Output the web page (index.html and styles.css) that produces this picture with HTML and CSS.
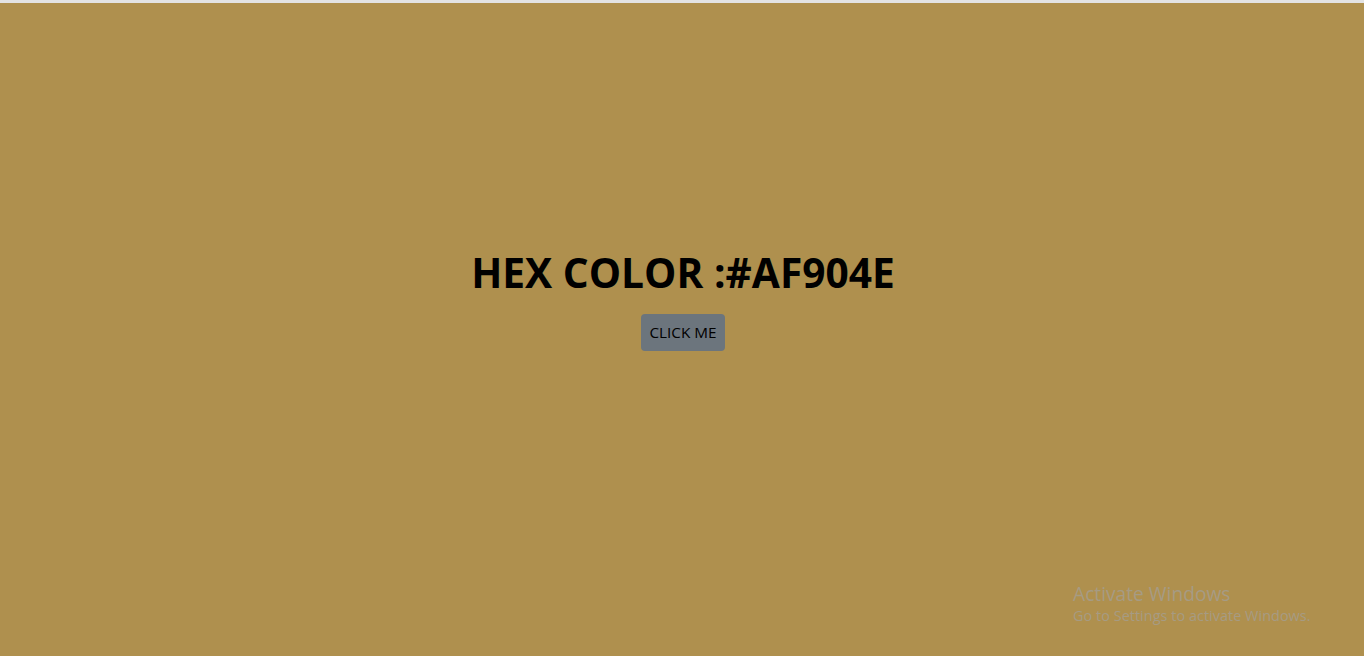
FILE: index.html
```html
<!DOCTYPE html>
<html lang="en">
<head>
<meta charset="utf-8">
<title>Hex Color</title>
<link rel="stylesheet" href="styles.css">
</head>
<body>
<div class="topbar"></div>
<main class="stage">
  <h1 class="title">HEX COLOR :#AF904E</h1>
  <button class="btn" type="button">CLICK ME</button>
</main>
<div class="watermark">
  <div class="wm-title">Activate Windows</div>
  <div class="wm-sub">Go to Settings to activate Windows.</div>
</div>
</body>
</html>
```

FILE: styles.css
```css
html, body {
  margin: 0;
  padding: 0;
  height: 100%;
}
body {
  background: #AF904E;
  font-family: "Open Sans", "Noto Sans", sans-serif;
  display: flex;
  flex-direction: column;
  overflow: hidden;
}
.topbar {
  height: 3px;
  background: #e3e3e3;
  flex: none;
}
.stage {
  display: flex;
  flex-direction: column;
  align-items: center;
  padding-top: 245px;
  padding-left: 2px;
}
.title {
  margin: 0;
  font-size: 40.7px;
  line-height: 48px;
  font-weight: 700;
  color: #000;
}
.btn {
  margin-top: 18px;
  background: #6c757d;
  color: #000;
  border: none;
  border-radius: 4px;
  font-family: "Open Sans", "Noto Sans", sans-serif;
  font-size: 15.3px;
  line-height: 24px;
  padding: 6px 4px 7px;
  width: 84px;
  height: 37px;
  cursor: pointer;
}
.watermark {
  position: absolute;
  left: 1073px;
  top: 581px;
  color: #a69b83;
  font-family: "Open Sans", "Noto Sans", sans-serif;
}
.wm-title {
  font-size: 19.2px;
  line-height: 25px;
}
.wm-sub {
  font-size: 14.5px;
  line-height: 20px;
}
```
